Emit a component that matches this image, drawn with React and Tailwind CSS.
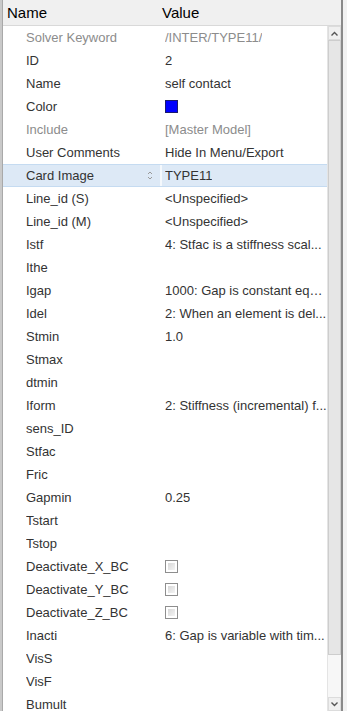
import { useState } from 'react'

const ROWS = [
  { name: 'Solver Keyword', value: '/INTER/TYPE11/', dim: true },
  { name: 'ID', value: '2' },
  { name: 'Name', value: 'self contact' },
  { name: 'Color', type: 'color' },
  { name: 'Include', value: '[Master Model]', dim: true },
  { name: 'User Comments', value: 'Hide In Menu/Export' },
  { name: 'Card Image', value: 'TYPE11', selected: true },
  { name: 'Line_id (S)', value: '<Unspecified>' },
  { name: 'Line_id (M)', value: '<Unspecified>' },
  { name: 'Istf', value: '4: Stfac is a stiffness scal...' },
  { name: 'Ithe', value: '' },
  { name: 'Igap', value: '1000: Gap is constant equ...' },
  { name: 'Idel', value: '2: When an element is del...' },
  { name: 'Stmin', value: '1.0' },
  { name: 'Stmax', value: '' },
  { name: 'dtmin', value: '' },
  { name: 'Iform', value: '2: Stiffness (incremental) f...' },
  { name: 'sens_ID', value: '' },
  { name: 'Stfac', value: '' },
  { name: 'Fric', value: '' },
  { name: 'Gapmin', value: '0.25' },
  { name: 'Tstart', value: '' },
  { name: 'Tstop', value: '' },
  { name: 'Deactivate_X_BC', type: 'check' },
  { name: 'Deactivate_Y_BC', type: 'check' },
  { name: 'Deactivate_Z_BC', type: 'check' },
  { name: 'Inacti', value: '6: Gap is variable with tim...' },
  { name: 'VisS', value: '' },
  { name: 'VisF', value: '' },
  { name: 'Bumult', value: '' },
]

function Caret({ down }) {
  return (
    <svg width="7" height="5" viewBox="0 0 7 5" className={down ? 'rotate-180' : ''}>
      <path d="M0.5 4.5 L3.5 1.5 L6.5 4.5" fill="none" stroke="#555" strokeWidth="1.4" />
    </svg>
  )
}

function Row({ row }) {
  const text = row.dim ? 'text-[#8c8c8c]' : 'text-[#333]'
  return (
    <div
      className={`flex h-[23px] items-center ${
        row.selected ? 'bg-[#dde9f6] border-y border-[#c5dbf1]' : ''
      }`}
    >
      <div className={`flex items-center w-[157px] pl-[23px] pr-1 h-full ${text}`}>
        <span className="flex-1 truncate">{row.name}</span>
        {row.selected && (
          <svg width="6" height="9" viewBox="0 0 6 9" className="mr-[3px]">
            <path d="M1 3 L3 1 L5 3 M1 6 L3 8 L5 6" fill="none" stroke="#9a9a9a" strokeWidth="1" />
          </svg>
        )}
      </div>
      <div className={`w-[2px] h-full ${row.selected ? 'bg-[#f4f8fc]' : ''}`} />
      <div className={`flex-1 flex items-center pl-[3px] h-full truncate ${text}`}>
        {row.type === 'color' && (
          <div className="w-[13px] h-[13px] bg-[#0000ff] border border-[#1a1a6e]" />
        )}
        {row.type === 'check' && (
          <div className="w-[13px] h-[13px] border border-[#8e8e8e] bg-white p-[2px]">
            <div className="w-full h-full bg-gradient-to-br from-[#d8d8d8] to-[#f4f4f4]" />
          </div>
        )}
        {row.value && <span className="truncate">{row.value}</span>}
      </div>
    </div>
  )
}

export default function App() {
  const [rows] = useState(ROWS)

  return (
    <div
      className="flex w-[347px] h-[711px] overflow-hidden bg-[#ebebeb] text-[13px]"
      style={{ fontFamily: '"Liberation Sans", Arial, sans-serif' }}
    >
      {/* left frame */}
      <div className="w-[3px] bg-[#c9c9c9] border-r border-[#a9a9a9]" />

      <div className="flex flex-col w-[338px]">
        {/* header */}
        <div className="flex items-center h-[26px] pt-[2px] bg-[#f0f0f0] border-b border-[#d9d9d9] text-[15px] text-black">
          <div className="w-[159px] pl-[4px]">Name</div>
          <div className="flex-1">Value</div>
        </div>

        <div className="flex flex-1 min-h-0">
          {/* list */}
          <div className="flex-1 bg-white overflow-hidden">
            {rows.map(r => (
              <Row key={r.name} row={r} />
            ))}
          </div>

          {/* scrollbar */}
          <div className="flex flex-col w-[14px] bg-[#f7f7f7] border-l border-[#e4e4e4]">
            <div className="flex items-center justify-center h-[14px] bg-[#f0f0f0] border border-[#dcdcdc]">
              <Caret />
            </div>
            <div className="h-[615px] bg-[#e6e6e6] border border-[#cdcdcd]" />
            <div className="flex-1" />
            <div className="flex items-center justify-center h-[14px] bg-[#f0f0f0] border border-[#dcdcdc]">
              <Caret down />
            </div>
          </div>
        </div>
      </div>

      {/* right frame */}
      <div className="w-[2px] bg-[#8a8a8a]" />
      <div className="flex-1 bg-[#f2f2f2]" />
    </div>
  )
}
